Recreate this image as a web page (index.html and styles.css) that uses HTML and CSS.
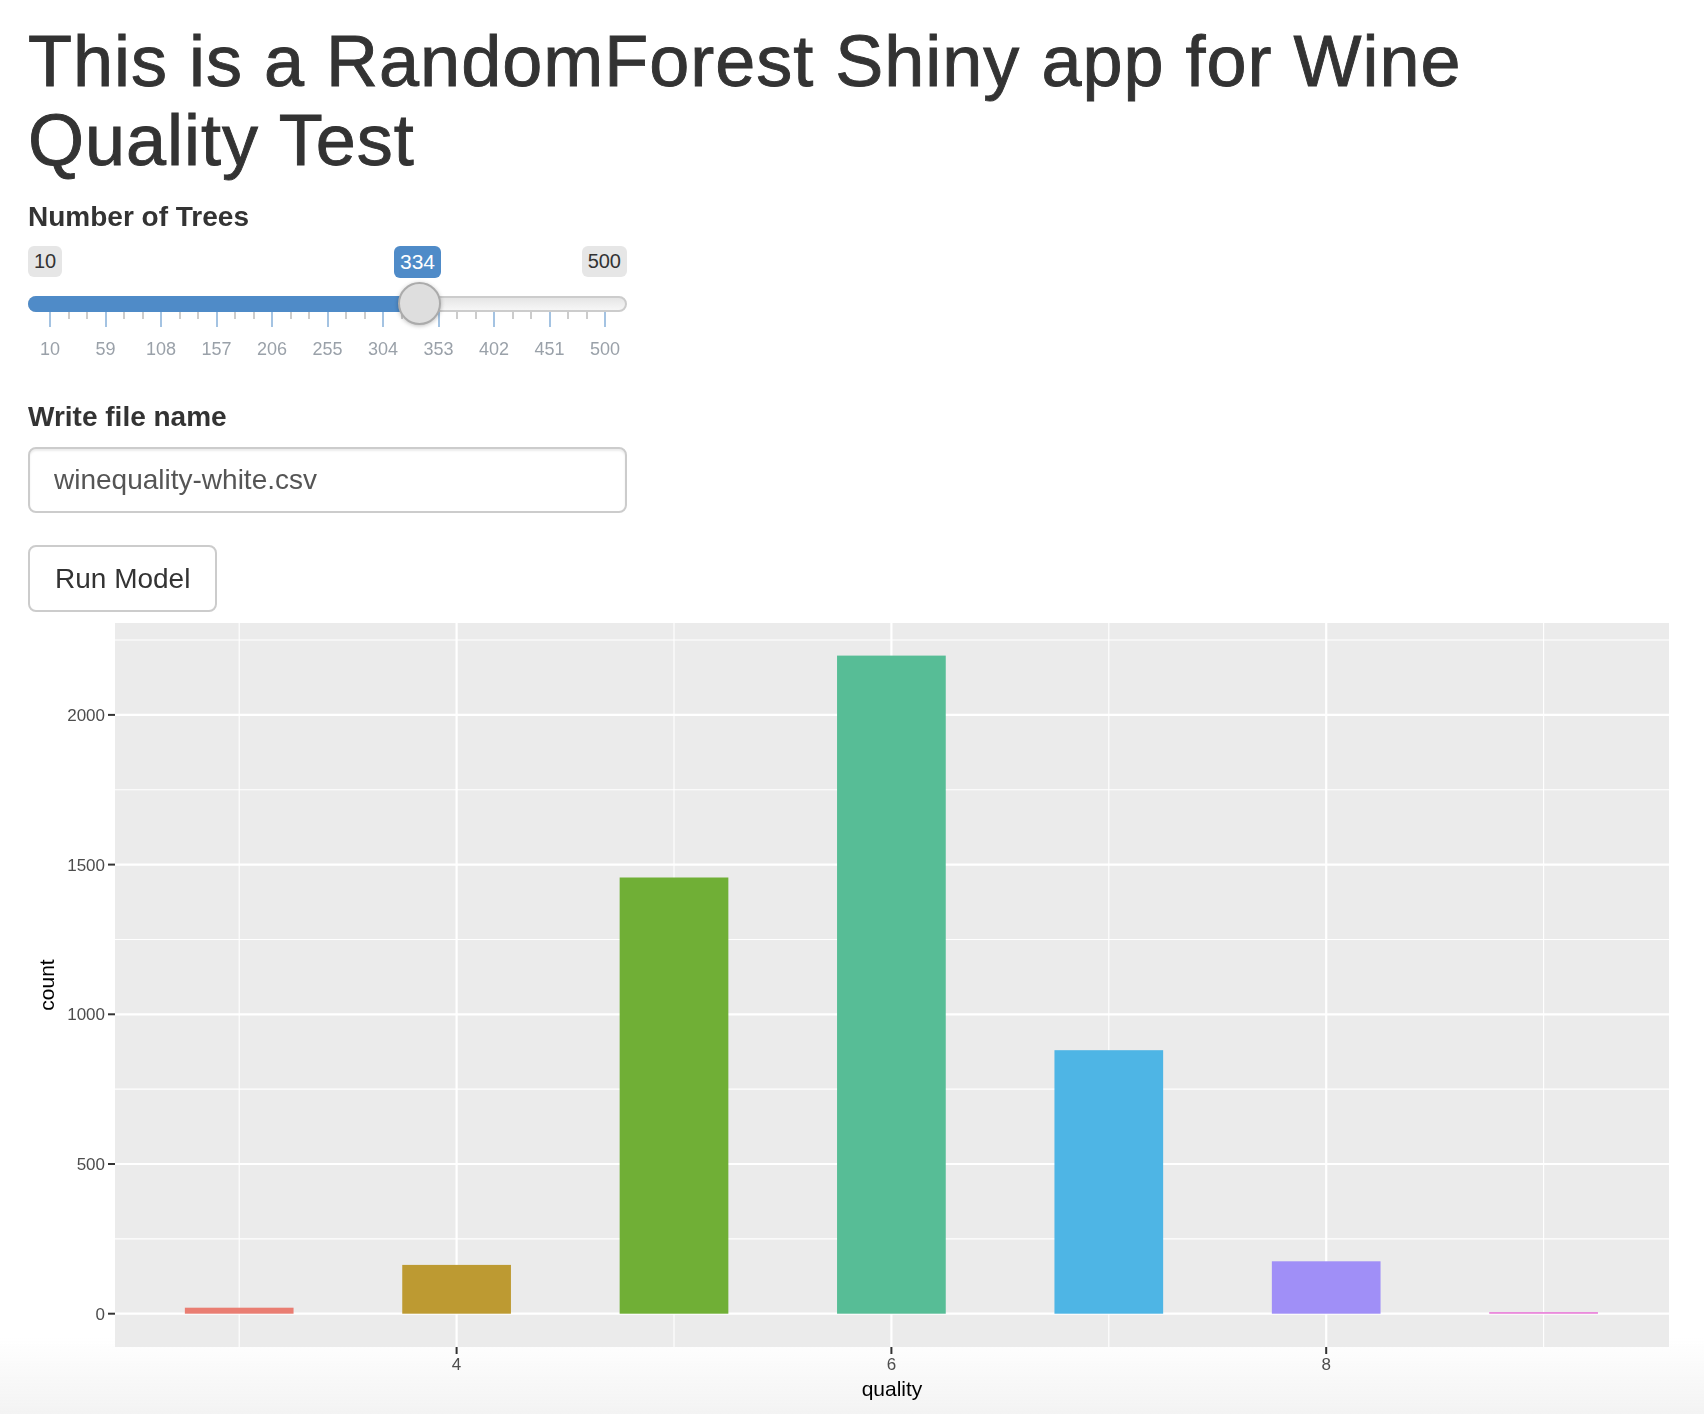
FILE: index.html
```html
<!DOCTYPE html>
<html lang="en">
<head>
  <meta charset="UTF-8">
  <meta name="viewport" content="width=device-width, initial-scale=1.0">
  <title>Wine Quality RandomForest</title>
  <link rel="stylesheet" href="styles.css">
</head>
<body>

  <div class="container-fluid">
    <h1>This is a RandomForest Shiny app for Wine Quality Test</h1>

    <div class="form-group">
      <label class="control-label slider-label">Number of Trees</label>
      <div class="irs">
        <div class="irs-top">
          <span class="irs-min">10</span>
          <span class="irs-max">500</span>
          <span class="irs-single" style="left: 366px;">334</span>
        </div>
        <div class="irs-line">
          <span class="irs-bar" style="width: 390px;"></span>
          <span class="irs-slider" style="left: 368px;"></span>
        </div>
        <div class="irs-grid">
          <span class="pol"></span><span class="pol small"></span><span class="pol small"></span>
          <span class="pol"></span><span class="pol small"></span><span class="pol small"></span>
          <span class="pol"></span><span class="pol small"></span><span class="pol small"></span>
          <span class="pol"></span><span class="pol small"></span><span class="pol small"></span>
          <span class="pol"></span><span class="pol small"></span><span class="pol small"></span>
          <span class="pol"></span><span class="pol small"></span><span class="pol small"></span>
          <span class="pol"></span><span class="pol small"></span><span class="pol small"></span>
          <span class="pol"></span><span class="pol small"></span><span class="pol small"></span>
          <span class="pol"></span><span class="pol small"></span><span class="pol small"></span>
          <span class="pol"></span><span class="pol small"></span><span class="pol small"></span>
          <span class="pol"></span>
        </div>
        <div class="irs-grid-text">
          <span>10</span><span>59</span><span>108</span><span>157</span><span>206</span><span>255</span>
          <span>304</span><span>353</span><span>402</span><span>451</span><span>500</span>
        </div>
      </div>
    </div>

    <div class="form-group">
      <label class="control-label" for="file">Write file name</label>
      <input type="text" id="file" class="form-control" value="winequality-white.csv">
    </div>

    <button type="button" class="btn">Run Model</button>

    <div class="plot">
      <svg width="1648" height="796" viewBox="0 0 1648 796">
        <!-- panel -->
        <rect x="87" y="8" width="1554" height="724" fill="#ebebeb"/>
        <!-- minor grid -->
        <g stroke="#ffffff" stroke-width="1.1">
          <line x1="87" x2="1641" y1="623.85" y2="623.85"/>
          <line x1="87" x2="1641" y1="474.15" y2="474.15"/>
          <line x1="87" x2="1641" y1="324.45" y2="324.45"/>
          <line x1="87" x2="1641" y1="174.75" y2="174.75"/>
          <line x1="87" x2="1641" y1="25.05" y2="25.05"/>
          <line x1="211.2" x2="211.2" y1="8" y2="732"/>
          <line x1="646" x2="646" y1="8" y2="732"/>
          <line x1="1080.8" x2="1080.8" y1="8" y2="732"/>
          <line x1="1515.6" x2="1515.6" y1="8" y2="732"/>
        </g>
        <!-- major grid -->
        <g stroke="#ffffff" stroke-width="2.2">
          <line x1="87" x2="1641" y1="698.7" y2="698.7"/>
          <line x1="87" x2="1641" y1="549" y2="549"/>
          <line x1="87" x2="1641" y1="399.3" y2="399.3"/>
          <line x1="87" x2="1641" y1="249.6" y2="249.6"/>
          <line x1="87" x2="1641" y1="99.9" y2="99.9"/>
          <line x1="428.6" x2="428.6" y1="8" y2="732"/>
          <line x1="863.4" x2="863.4" y1="8" y2="732"/>
          <line x1="1298.2" x2="1298.2" y1="8" y2="732"/>
        </g>
        <!-- bars -->
        <rect x="156.85" y="692.7" width="108.7" height="6" fill="#e97d72"/>
        <rect x="374.25" y="649.9" width="108.7" height="48.8" fill="#bd9a32"/>
        <rect x="591.65" y="262.5" width="108.7" height="436.2" fill="#70af36"/>
        <rect x="809.05" y="40.6" width="108.7" height="658.1" fill="#57bd96"/>
        <rect x="1026.45" y="435.2" width="108.7" height="263.5" fill="#4eb5e5"/>
        <rect x="1243.85" y="646.3" width="108.7" height="52.4" fill="#a08ff7"/>
        <rect x="1461.25" y="697.2" width="108.7" height="1.5" fill="#e772d5"/>
        <!-- axes ticks -->
        <g stroke="#333333" stroke-width="2">
          <line x1="80" x2="87" y1="698.7" y2="698.7"/>
          <line x1="80" x2="87" y1="549" y2="549"/>
          <line x1="80" x2="87" y1="399.3" y2="399.3"/>
          <line x1="80" x2="87" y1="249.6" y2="249.6"/>
          <line x1="80" x2="87" y1="99.9" y2="99.9"/>
          <line x1="428.6" x2="428.6" y1="732" y2="739"/>
          <line x1="863.4" x2="863.4" y1="732" y2="739"/>
          <line x1="1298.2" x2="1298.2" y1="732" y2="739"/>
        </g>
        <g class="axis-text" text-anchor="end">
          <text x="77" y="704.7">0</text>
          <text x="77" y="555">500</text>
          <text x="77" y="405.3">1000</text>
          <text x="77" y="255.6">1500</text>
          <text x="77" y="105.9">2000</text>
        </g>
        <g class="axis-text" text-anchor="middle">
          <text x="428.6" y="755">4</text>
          <text x="863.4" y="755">6</text>
          <text x="1298.2" y="755">8</text>
        </g>
        <text class="axis-title" x="864" y="781" text-anchor="middle">quality</text>
        <text class="axis-title" x="0" y="0" text-anchor="middle" transform="translate(26 370) rotate(-90)">count</text>
      </svg>
    </div>
  </div>

  <div class="fade"></div>

</body>
</html>
```

FILE: styles.css
```css
html, body {
  margin: 0;
  height: 1414px;
  overflow: hidden;
}

body {
  position: relative;
  z-index: 0;
  background-color: #ffffff;
  color: #333333;
  font-family: "Liberation Sans", Arial, sans-serif;
  font-size: 28px;
  line-height: 1.42857;
}

.container-fluid {
  padding: 0 28px;
}

h1 {
  font-size: 72px;
  font-weight: 500;
  line-height: 1.1;
  letter-spacing: 1px;
  -webkit-text-stroke: 0.9px #333333;
  margin: 22px 0 17px;
}

.form-group {
  margin-bottom: 30px;
}

.control-label {
  display: block;
  font-weight: bold;
  margin-bottom: 10px;
}

.slider-label {
  margin-bottom: 9px;
}

/* slider */
.irs {
  width: 599px;
  padding-bottom: 6px;
  font-family: "Liberation Sans", Arial, sans-serif;
}

.irs-top {
  position: relative;
  display: flex;
  justify-content: space-between;
  height: 32px;
}

.irs-min,
.irs-max,
.irs-single {
  font-size: 20px;
  line-height: 1.333;
  padding: 2px 6px;
  border-radius: 6px;
  background: #e6e6e6;
  color: #333333;
  align-self: flex-start;
}

.irs-single {
  position: absolute;
  top: 0;
  font-size: 21px;
  background: #4f8bc8;
  color: #ffffff;
}

.irs-line {
  position: relative;
  margin-top: 18px;
  height: 16px;
  box-sizing: border-box;
  border: 2px solid #cccccc;
  border-radius: 16px;
  background: linear-gradient(to bottom, #dddddd -50%, #ffffff 150%);
}

.irs-bar {
  position: absolute;
  top: -2px;
  left: -2px;
  height: 16px;
  background: #4f8bc8;
  border-radius: 16px 0 0 16px;
}

.irs-slider {
  position: absolute;
  top: -16px;
  width: 43px;
  height: 43px;
  box-sizing: border-box;
  border: 2px solid #ababab;
  border-radius: 50%;
  background: #dedede;
  box-shadow: 0 1px 4px rgba(0, 0, 0, 0.25);
}

.irs-grid {
  display: flex;
  justify-content: space-between;
  align-items: flex-start;
  margin-top: -1px;
  padding: 0 21px 0 21px;
  height: 16px;
}

.pol {
  width: 2px;
  height: 16px;
  background: #a4c3e2;
}

.pol.small {
  height: 8px;
  background: #cccccc;
}

.irs-grid-text {
  display: grid;
  grid-template-columns: repeat(11, 55.5px);
  margin: 10px 0 0 -5.75px;
  font-size: 18px;
  line-height: 24px;
  color: #9aa1a9;
  text-align: center;
}

/* file input */
.form-control {
  display: block;
  width: 599px;
  height: 66px;
  box-sizing: border-box;
  padding: 12px 24px;
  font-family: "Liberation Sans", Arial, sans-serif;
  font-size: 28px;
  color: #555555;
  border: 2px solid #cccccc;
  border-radius: 8px;
  box-shadow: inset 0 2px 2px rgba(0, 0, 0, 0.075);
}

.btn {
  display: block;
  height: 67px;
  padding: 12px 25px;
  font-family: "Liberation Sans", Arial, sans-serif;
  font-size: 28px;
  color: #333333;
  background: #ffffff;
  border: 2px solid #cccccc;
  border-radius: 8px;
  cursor: pointer;
}

.form-group + .btn {
  margin-top: 32px;
}

/* ggplot output */
.plot {
  margin-top: 3px;
}

.plot svg {
  display: block;
}

.axis-text {
  font-family: "Liberation Sans", Arial, sans-serif;
  font-size: 17px;
  fill: #4d4d4d;
}

.axis-title {
  font-family: "Liberation Sans", Arial, sans-serif;
  font-size: 21px;
  fill: #000000;
}

/* soft shade along the bottom edge, behind the content */
.fade {
  position: fixed;
  left: 0;
  right: 0;
  bottom: 0;
  height: 76px;
  z-index: -1;
  pointer-events: none;
  background: linear-gradient(to bottom, rgba(243, 243, 243, 0), rgba(243, 243, 243, 1));
}
```
